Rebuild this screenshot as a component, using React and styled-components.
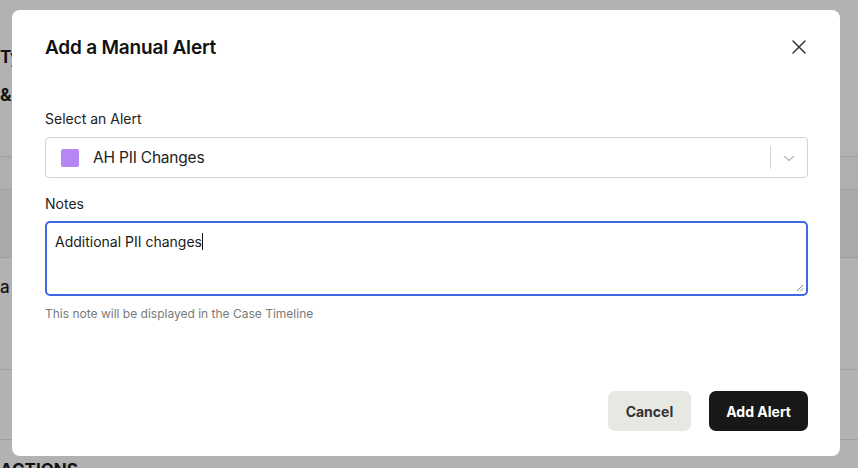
import React from 'react';
import styled, { createGlobalStyle } from 'styled-components';

const Global = createGlobalStyle`
  html, body { margin: 0; padding: 0; }
  body {
    font-family: Inter, "Noto Sans", "Liberation Sans", sans-serif;
    background: #fff;
    overflow: hidden;
  }
`;

const Page = styled.div`
  width: 858px;
  height: 468px;
  position: relative;
  overflow: hidden;
  background: #fff;
  color: #1a1a1a;
`;

const PageTop = styled.div`
  height: 157px;
  padding-top: 45px;
  box-sizing: border-box;
  border-bottom: 1px solid #e4e4e4;
`;

const PageText = styled.div`
  font-size: 17px;
  font-weight: ${(p) => (p.$bold ? 700 : 500)};
  line-height: 24px;
  margin-bottom: ${(p) => p.$gap || 0}px;
  white-space: nowrap;
`;

const Band = styled.div`
  height: ${(p) => p.$h}px;
  background: ${(p) => p.$bg || '#fff'};
  border-bottom: 1px solid ${(p) => p.$line || '#e6e6e6'};
  box-sizing: border-box;
  padding-top: ${(p) => p.$pt || 0}px;
`;

const Overlay = styled.div`
  position: absolute;
  inset: 0;
  background: rgba(0, 0, 0, 0.3);
  padding: 10px 0 0 12px;
`;

const Modal = styled.div`
  width: 828px;
  height: 446px;
  box-sizing: border-box;
  background: #fff;
  border-radius: 8px;
  padding: 25px 32px 25px 33px;
  display: flex;
  flex-direction: column;
`;

const Header = styled.div`
  display: flex;
  align-items: center;
  justify-content: space-between;
  height: 24px;
`;

const Title = styled.h2`
  margin: 0;
  font-size: 19px;
  font-weight: 600;
  color: #111;
  letter-spacing: -0.2px;
`;

const CloseButton = styled.button`
  border: 0;
  background: none;
  padding: 0;
  margin-right: 2px;
  width: 14px;
  height: 14px;
  display: flex;
  cursor: pointer;
  color: #333;
`;

const Label = styled.label`
  display: block;
  font-size: 14px;
  line-height: 20px;
  color: #222;
  margin-top: ${(p) => p.$mt}px;
`;

const Select = styled.div`
  margin-top: 8px;
  height: 41px;
  box-sizing: border-box;
  border: 1px solid #d2d2d2;
  border-radius: 4px;
  display: flex;
  align-items: center;
  padding-left: 15px;
`;

const Swatch = styled.span`
  width: 18px;
  height: 18px;
  border-radius: 2px;
  background: ${(p) => p.$color};
  flex: none;
`;

const SelectValue = styled.span`
  flex: 1;
  margin-left: 14px;
  font-size: 15.5px;
  letter-spacing: -0.2px;
  color: #222;
`;

const Separator = styled.span`
  width: 1px;
  height: 23px;
  background: #d6d6d6;
`;

const Indicator = styled.span`
  display: flex;
  padding: 8px;
  color: #bdbdbd;
`;

const TextArea = styled.div`
  margin-top: 7px;
  height: 75px;
  box-sizing: border-box;
  border: 2px solid #3f68e2;
  border-radius: 5px;
  padding: 8.5px 8px;
  font-size: 14px;
  line-height: 20px;
  color: #1a1a1a;
  position: relative;
`;

const Caret = styled.span`
  display: inline-block;
  width: 1px;
  height: 17px;
  background: #111;
  vertical-align: -3px;
`;

const Grip = styled.svg`
  position: absolute;
  right: 2px;
  bottom: 2px;
`;

const Hint = styled.div`
  margin-top: 10px;
  font-size: 12px;
  line-height: 16px;
  color: #7a7a7a;
`;

const Footer = styled.div`
  margin-top: auto;
  display: flex;
  justify-content: flex-end;
  gap: 18px;
`;

const Button = styled.button`
  height: 40px;
  padding: 0 ${(p) => (p.$primary ? 17 : 18)}px;
  border: 0;
  border-radius: 7px;
  font-family: inherit;
  font-size: 14px;
  font-weight: 700;
  background: ${(p) => (p.$primary ? '#181818' : '#e8e8e3')};
  color: ${(p) => (p.$primary ? '#fff' : '#333')};
  cursor: pointer;
`;

const App = () => (
  <>
    <Global />
    <Page>
      <PageTop>
        <PageText $bold $gap={14}>Type</PageText>
        <PageText $bold>& Details</PageText>
      </PageTop>
      <Band $h={33} $bg="#fbfbfb" />
      <Band $h={68} $bg="#f2f2f2" />
      <Band $h={112} $pt={17}>
        <PageText>a</PageText>
      </Band>
      <Band $h={70} />
      <Band $h={30} $pt={18}>
        <PageText $bold>ACTIONS</PageText>
      </Band>
      <Overlay>
        <Modal>
          <Header>
            <Title>Add a Manual Alert</Title>
            <CloseButton aria-label="Close">
              <svg width="14" height="14" viewBox="0 0 14 14">
                <path d="M1 1L13 13M13 1L1 13" stroke="currentColor" strokeWidth="1.5" strokeLinecap="round" />
              </svg>
            </CloseButton>
          </Header>
          <Label $mt={50}>Select an Alert</Label>
          <Select>
            <Swatch $color="#b687f4" />
            <SelectValue>AH PII Changes</SelectValue>
            <Separator />
            <Indicator>
              <svg width="20" height="20" viewBox="0 0 20 20">
                <path d="M5.5 8.5L10 12.5L14.5 8.5" fill="none" stroke="currentColor" strokeWidth="1.6" strokeLinecap="round" strokeLinejoin="round" />
              </svg>
            </Indicator>
          </Select>
          <Label $mt={16}>Notes</Label>
          <TextArea>
            Additional PII changes<Caret />
            <Grip width="8" height="8" viewBox="0 0 8 8">
              <path d="M7 1L1 7M7 4.5L4.5 7" stroke="#888" strokeWidth="1" />
            </Grip>
          </TextArea>
          <Hint>This note will be displayed in the Case Timeline</Hint>
          <Footer>
            <Button>Cancel</Button>
            <Button $primary>Add Alert</Button>
          </Footer>
        </Modal>
      </Overlay>
    </Page>
  </>
);

export default App;
